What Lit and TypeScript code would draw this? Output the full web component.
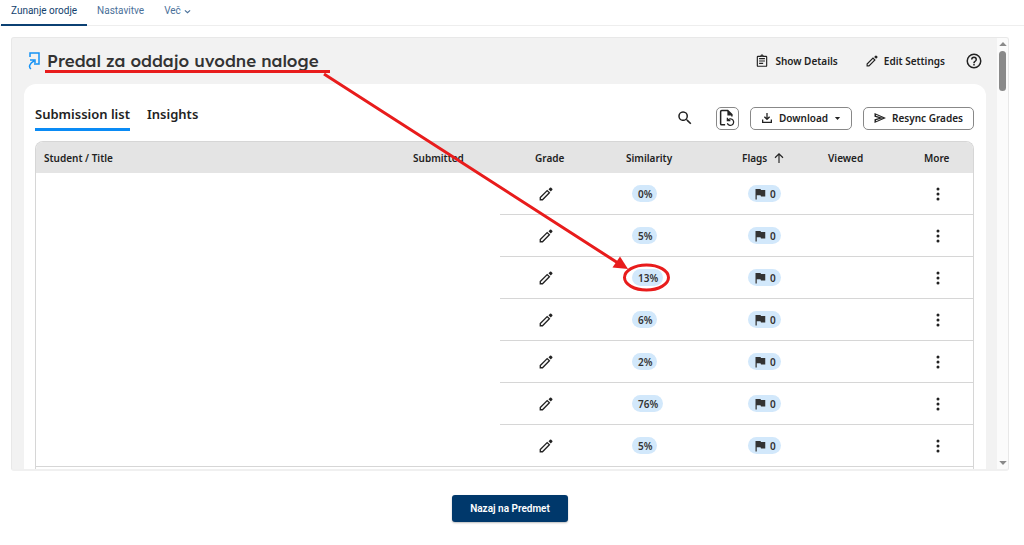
import { LitElement, html, css, svg } from "lit";
import { customElement, state } from "lit/decorators.js";

const icons = {
  chevron: svg`<path d="M3 8l9 8 9-8" fill="none" stroke="currentColor" stroke-width="4"/>`,
  clipboard: svg`<path d="M7 15h7v2H7zm0-4h10v2H7zm0-4h10v2H7zm12-4h-4.180C14.400 1.840 13.300 1 12 1s-2.400.840-2.820 2H5a2 2 0 0 0-2 2v15a2 2 0 0 0 2 2h14a2 2 0 0 0 2-2V5a2 2 0 0 0-2-2zm-7-.250a.750.750 0 1 1 0 1.500.750.750 0 0 1 0-1.500zM19 20H5V5h14z"/>`,
  pencil: svg`<path d="M2.200 18L14 6.200l3.800 3.800L6 21.800H2.200z" fill="none" stroke="currentColor" stroke-width="2.300"/><path d="M16.300 3.800L18.800 1.300a1.600 1.600 0 0 1 2.200 0l1.700 1.700a1.600 1.600 0 0 1 0 2.200L20.200 7.700z"/>`,
  help: svg`<path d="M11 18h2v-2h-2zm1-16a10 10 0 1 0 0 20 10 10 0 0 0 0-20zm0 18a8 8 0 1 1 0-16 8 8 0 0 1 0 16zm0-14a4 4 0 0 0-4 4h2a2 2 0 1 1 4 0c0 2-3 1.750-3 5h2c0-2.250 3-2.500 3-5a4 4 0 0 0-4-4z"/>`,
  search: svg`<path d="M15.500 14h-.790l-.280-.270A6.500 6.500 0 1 0 13.730 14.430l.270.280v.790l5 4.990L20.490 19zm-6 0a4.500 4.500 0 1 1 0-9 4.500 4.500 0 0 1 0 9z"/>`,
  download: svg`<path d="M10.700 2h2.600v9.500l3-3 1.900 1.900L12 16.600l-6.200-6.200 1.900-1.900 3 3zM2 15h2.600v4.400h14.800V15H22v7H2z"/>`,
  send: svg`<path fill-rule="evenodd" d="M1 2l23 10L1 22v-7.500l9-2.500-9-2.500zM4 5.500v2L18 12 4 16.500v2L18.500 12z"/>`,
  arrow: svg`<path d="M12 22V3.500M4 11.500l8-8 8 8" fill="none" stroke="currentColor" stroke-width="2.300"/>`,
  flag: svg`<path d="M3 2h10l1 2h8.500v13H14l-1-2.500H5.500V23H3z"/>`,
  dots: svg`<circle cx="12" cy="3.500" r="2.600"/><circle cx="12" cy="12" r="2.600"/><circle cx="12" cy="20.500" r="2.600"/>`,
  file: svg`<path d="M9.500 21H5a1.500 1.500 0 0 1-1.500-1.500v-16A1.500 1.500 0 0 1 5 2h8L18.500 7.500V10" fill="none" stroke="currentColor" stroke-width="2"/><path d="M12.500 2v6.500h6.500z"/><path d="M13.500 14.500a4.300 4.300 0 1 1-1 4.500M12.500 11.500v4h4" fill="none" stroke="currentColor" stroke-width="1.700"/>`,
  caret: svg`<path d="M3 7h18l-9 10z"/>`,
};

const icon = (name: keyof typeof icons, size = "m") =>
  html`<svg class="icon ${size}" viewBox="0 0 24 24" aria-hidden="true">${icons[name]}</svg>`;

@customElement("app-root")
export class AppRoot extends LitElement {
  @state() private rows = [0, 5, 13, 6, 2, 76, 5];

  static styles = css`
    :host {
      display: block;
      font-family: "Noto Sans", "Open Sans", sans-serif;
      font-size: 10px;
      font-weight: 600;
      line-height: 16px;
      color: #222;
    }
    * { box-sizing: border-box; }
    button { font: inherit; color: inherit; background: none; border: 0; padding: 0; cursor: pointer; display: flex; align-items: center; white-space: nowrap; }
    a { color: inherit; text-decoration: none; }
    .icon { display: block; flex: none; fill: currentColor; width: 14px; height: 14px; }
    .icon.xs { width: 7px; height: 7px; }
    .icon.s { width: 12px; height: 12px; }
    .icon.l { width: 18px; height: 18px; }
    .page { display: flex; flex-direction: column; height: 100vh; background: #fff; overflow: hidden; }
    .nav { display: flex; height: 26px; padding-left: 1px; border-bottom: 1px solid #eee; font-family: Roboto, "Noto Sans", sans-serif; font-weight: 400; color: #4a7099; }
    .nav a { display: flex; align-items: center; gap: 3px; height: 26px; padding: 0 10px 2px; border-bottom: 2px solid transparent; }
    .nav a.on { color: #123f6d; border-color: #0b4073; }
    .frame { position: relative; flex: 1; min-height: 0; display: flex; margin: 11px 15px 0 11px; border: 1px solid #e8e8e8; border-bottom: 2px solid #f0f0f0; border-radius: 3px; background: #f2f2f2; overflow: hidden; }
    .view { flex: 1; min-width: 0; display: flex; flex-direction: column; padding: 0 11px 0 12px; }
    .head { display: flex; align-items: center; height: 46px; padding: 0 3px 0 4px; gap: 20px; }
    .title { display: flex; align-items: center; gap: 7px; flex: 1; color: #333; }
    .title h1 { margin: 0; font: 500 17px/24px Lexend, "Noto Sans", sans-serif; white-space: nowrap; }
    .logo { width: 12px; height: 18px; fill: none; stroke: #1492f5; stroke-width: 1.5; }
    .head button { gap: 6px; }
    .actions { display: flex; align-items: center; gap: 28px; }
    .card { flex: 1; min-height: 0; display: flex; flex-direction: column; background: #fff; border-radius: 12px 12px 0 0; padding: 18px 12px 0 11px; }
    .bar { display: flex; flex: none; align-items: center; height: 39px; padding-bottom: 7px; }
    .tabs { display: flex; align-self: flex-start; gap: 17px; flex: 1; font-size: 13px; }
    .tabs button { height: 29px; padding-bottom: 2px; border-bottom: 3px solid transparent; }
    .tabs button.on { border-color: #0a8bf5; border-radius: 2px 2px 0 0; }
    .tools { display: flex; align-items: center; gap: 11px; }
    .tools .box { height: 23px; border: 1px solid #888; border-radius: 5px; padding: 0 10px; gap: 6px; }
    .tools .box.sq { width: 23px; padding: 0; justify-content: center; }
    .tools .find { padding-right: 11px; }
    .grid { flex: 1; border: 1px solid #d6d6d6; border-bottom: 0; border-radius: 8px 8px 0 0; overflow: hidden; }
    table { width: 100%; table-layout: fixed; border-collapse: separate; border-spacing: 0; }
    th, td { padding: 0; text-align: left; font-weight: 600; }
    th { height: 31px; background: #e4e4e4; }
    th:first-child { padding-left: 8px; }
    td { height: 42px; }
    td.line, tr:last-child td { border-bottom: 1px solid #d6d6d6; }
    th.grade { padding-left: 35px; }
    td.grade { padding-left: 39px; }
    td.mark { padding-left: 6px; }
    td.more { padding-left: 7px; }
    .sort { display: flex; align-items: center; gap: 6px; }
    .c-sub { width: 87px; }
    .c-grade { width: 126px; }
    .c-sim { width: 116px; }
    .c-flag { width: 86px; }
    .c-view { width: 96px; }
    .c-more { width: 49px; }
    .pill { display: flex; width: fit-content; align-items: center; gap: 4px; height: 17px; padding: 0 5px 0 6px; border-radius: 9px; background: #d2e8fb; color: #333; }
    .scroll { width: 11px; display: flex; flex-direction: column; align-items: center; background: #fbfbfb; color: #8a8a8a; padding: 1px 0; }
    .scroll .m { width: 10px; height: 10px; }
    .scroll .up { transform: rotate(180deg); }
    .track { flex: 1; width: 7px; padding-top: 2px; }
    .thumb { height: 40px; border-radius: 4px; background: #8a8a8a; }
    .marks { position: absolute; left: 0; top: 0; width: 700px; height: 300px; fill: none; stroke: #e81c1c; stroke-width: 3; pointer-events: none; }
    .foot { display: flex; justify-content: center; align-items: flex-start; height: 74px; padding: 24px 4px 0 0; }
    .back { height: 27px; padding: 0 18px; border-radius: 3px; background: #00386b; color: #fff; font-family: Roboto, "Noto Sans", sans-serif; font-size: 10px; font-weight: 600; box-shadow: 0 1px 2px #0004; }
  `;

  render() {
    return html`
      <div class="page">
        <nav class="nav">
          <a class="on" href="#orodje">Zunanje orodje</a>
          <a href="#nastavitve">Nastavitve</a>
          <a href="#vec">Več ${icon("chevron", "xs")}</a>
        </nav>
        <main class="frame">
          <div class="view">
            <header class="head">
              <div class="title">
                <svg class="logo" viewBox="0 0 12 18"><path d="M2 5V1h9v11H8M3 17c-3-2-1-6 3-8M2 8h5v5"/></svg>
                <h1>Predal za oddajo uvodne naloge</h1>
              </div>
              <div class="actions">
                <button>${icon("clipboard")}Show Details</button>
                <button>${icon("pencil", "s")}Edit Settings</button>
              </div>
              <button aria-label="Help">${icon("help", "l")}</button>
            </header>
            <section class="card">
              <div class="bar">
                <div class="tabs">
                  <button class="on">Submission list</button>
                  <button>Insights</button>
                </div>
                <div class="tools">
                  <button class="find" aria-label="Search">${icon("search", "l")}</button>
                  <button class="box sq" aria-label="Refresh file">${icon("file", "l")}</button>
                  <button class="box">${icon("download", "s")}Download ${icon("caret", "xs")}</button>
                  <button class="box">${icon("send", "s")}Resync Grades</button>
                </div>
              </div>
              <div class="grid">
                <table>
                  <colgroup><col /><col class="c-sub" /><col class="c-grade" /><col class="c-sim" /><col class="c-flag" /><col class="c-view" /><col class="c-more" /></colgroup>
                  <thead>
                    <tr>
                      <th>Student / Title</th><th>Submitted</th><th class="grade">Grade</th><th>Similarity</th>
                      <th><span class="sort">Flags ${icon("arrow", "s")}</span></th><th>Viewed</th><th>More</th>
                    </tr>
                  </thead>
                  <tbody>
                    ${this.rows.map((n) => html`<tr>
                      <td></td><td></td>
                      <td class="line grade"><button aria-label="Edit grade">${icon("pencil")}</button></td>
                      <td class="line mark"><span class="pill">${n}%</span></td>
                      <td class="line mark"><span class="pill">${icon("flag", "s")}0</span></td>
                      <td class="line"></td>
                      <td class="line more"><button aria-label="More">${icon("dots")}</button></td>
                    </tr>`)}
                  </tbody>
                </table>
              </div>
            </section>
          </div>
          <div class="scroll">${icon("caret", "m up")}<div class="track"><div class="thumb"></div></div>${icon("caret")}</div>
          <svg class="marks" viewBox="12 38 700 300">
            <path d="M45 71.500H330M324 74L618 263"/>
            <ellipse cx="646.500" cy="277.500" rx="22" ry="12.500"/>
            <path d="M628 269L612.500 267.500L620 256.500Z" fill="#e81c1c" stroke="none"/>
          </svg>
        </main>
        <footer class="foot"><button class="back">Nazaj na Predmet</button></footer>
      </div>`;
  }
}
